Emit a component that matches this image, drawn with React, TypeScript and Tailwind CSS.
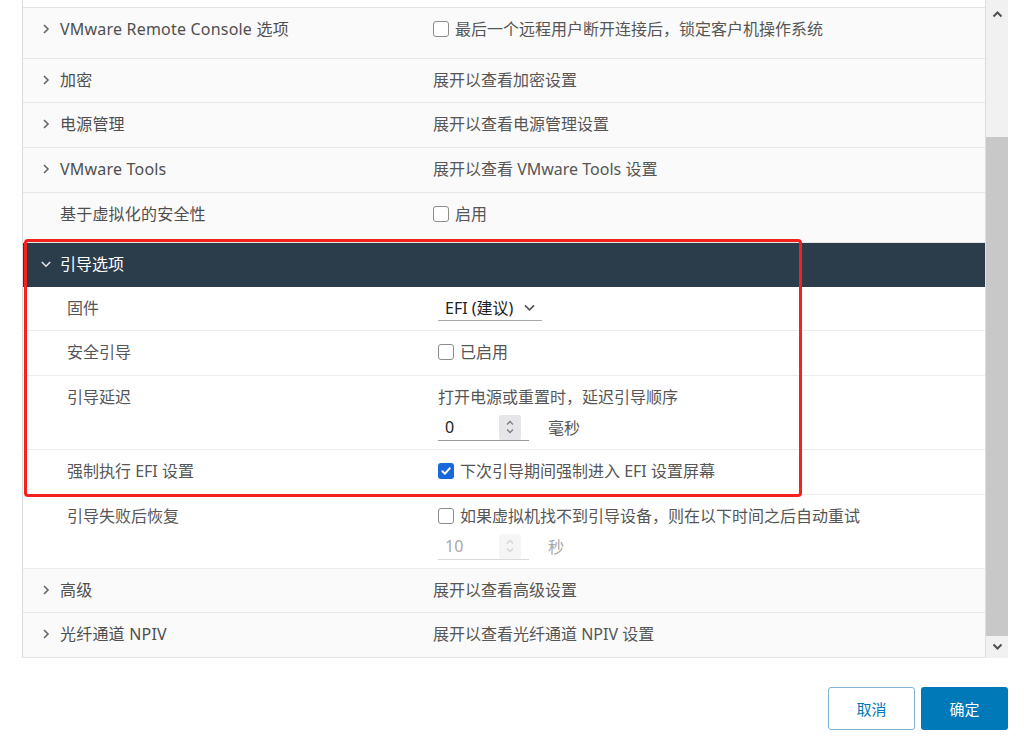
import { ReactNode } from "react";

function ChevronRight() {
  return (
    <svg width="10" height="12" viewBox="0 0 10 12" className="shrink-0">
      <path d="M3 2 7 6 3 10" fill="none" stroke="currentColor" strokeWidth="1.6" />
    </svg>
  );
}

function ChevronDown({ size = 12 }: { size?: number }) {
  return (
    <svg width={size} height={size} viewBox="0 0 12 12" className="shrink-0">
      <path d="M1.8 4 6 8.2 10.2 4" fill="none" stroke="currentColor" strokeWidth="1.5" />
    </svg>
  );
}

function Checkbox({ checked = false }: { checked?: boolean }) {
  if (checked) {
    return (
      <span className="flex h-4 w-4 shrink-0 items-center justify-center rounded-[3px] bg-[#1769d9]">
        <svg width="12" height="12" viewBox="0 0 12 12">
          <path
            d="M2.4 6.2 5 8.7 9.7 3.3"
            fill="none"
            stroke="white"
            strokeWidth="2"
            strokeLinecap="round"
            strokeLinejoin="round"
          />
        </svg>
      </span>
    );
  }
  return <span className="h-4 w-4 shrink-0 rounded-[3px] border border-[#8c8c8c] bg-white" />;
}

function NumberField({ value, unit, disabled = false }: { value: string; unit: string; disabled?: boolean }) {
  return (
    <div className="mt-[6px] flex items-center">
      <div
        className={`flex h-[27px] w-[91px] items-center justify-between border-b pl-[7px] pr-[8px] ${
          disabled ? "border-[#dadada] text-[#a8a8a8]" : "border-[#9a9a9a] text-[#222]"
        }`}
      >
        <span>{value}</span>
        <span
          className={`flex h-[25px] w-[22px] items-center justify-center rounded-[2px] ${
            disabled ? "bg-[#f5f5f5] text-[#d4d4d4]" : "bg-[#e5e5ea] text-[#7c7c7c]"
          }`}
        >
          <svg width="10" height="18" viewBox="0 0 10 18">
            <path d="M2 6.5 5 3.5 8 6.5M2 11.5 5 14.5 8 11.5" fill="none" stroke="currentColor" strokeWidth="1.3" />
          </svg>
        </span>
      </div>
      <span className={`ml-[19px] ${disabled ? "text-[#a8a8a8]" : "text-[#565656]"}`}>{unit}</span>
    </div>
  );
}

function Row({
  label,
  value,
  height,
  chevron = true,
}: {
  label: string;
  value: ReactNode;
  height: string;
  chevron?: boolean;
}) {
  return (
    <div className={`flex items-start border-b border-[#e6e6e6] bg-[#fafafa] pt-[10px] ${height}`}>
      <div className="flex h-[22px] w-[410px] shrink-0 items-center pl-[18px] text-[#4f4f4f]">
        {chevron ? (
          <span className="mr-[9px] flex w-[10px] text-[#666]">
            <ChevronRight />
          </span>
        ) : (
          <span className="mr-[9px] w-[10px]" />
        )}
        <span className="tracking-[0.2px]">{label}</span>
      </div>
      <div className="flex-1 text-[#565656]">{value}</div>
    </div>
  );
}

function SubRow({ label, height, children, padTop = "pt-[10px]" }: { label: string; height: string; children: ReactNode; padTop?: string }) {
  return (
    <div className={`flex border-b border-[#ececec] bg-white ${height}`}>
      <div className="w-[415px] shrink-0 pt-[10px] pl-[44px] text-[#565656]">{label}</div>
      <div className={`flex-1 text-[#565656] ${padTop}`}>{children}</div>
    </div>
  );
}

function CheckText({ checked = false, children }: { checked?: boolean; children: ReactNode }) {
  return (
    <div className="flex items-center gap-[6px]">
      <Checkbox checked={checked} />
      <span>{children}</span>
    </div>
  );
}

export default function App() {
  return (
    <div className="relative h-[743px] w-[1024px] overflow-hidden bg-white font-['Noto_Sans','Noto_Sans_CJK_SC',sans-serif] text-[16px] leading-[22px]">
      <div className="ml-[22px] flex h-[658px] w-[986px] border-l border-[#dcdcdc]">
        <div className="w-[963px] border-r border-[#dedede] pt-[7px]">
          <div className="border-t border-[#e3e3e3]">
            <Row
              label="VMware Remote Console 选项"
              height="h-[51px]"
              value={<CheckText>最后一个远程用户断开连接后，锁定客户机操作系统</CheckText>}
            />
            <Row label="加密" height="h-[44px]" value="展开以查看加密设置" />
            <Row label="电源管理" height="h-[45px]" value="展开以查看电源管理设置" />
            <Row label="VMware Tools" height="h-[45px]" value="展开以查看 VMware Tools 设置" />
            <Row label="基于虚拟化的安全性" height="h-[50px]" chevron={false} value={<CheckText>启用</CheckText>} />

            <div className="flex h-[44px] items-start bg-[#2b3d4a] pt-[10px] pl-[17px] text-white">
              <span className="mr-[8px] flex h-[22px] w-[12px] items-center text-[#e8e8e8]">
                <ChevronDown />
              </span>
              <span>引导选项</span>
            </div>
            <SubRow label="固件" height="h-[44px]" padTop="pt-[8px]">
              <div className="flex h-[26px] w-[104px] items-center justify-between border-b border-[#a8a8a8] pl-[7px] pr-[6px] text-[#222]">
                <span>EFI (建议)</span>
                <span className="text-[#555]">
                  <ChevronDown size={13} />
                </span>
              </div>
            </SubRow>
            <SubRow label="安全引导" height="h-[45px]">
              <CheckText>已启用</CheckText>
            </SubRow>
            <SubRow label="引导延迟" height="h-[74px]">
              <div>打开电源或重置时，延迟引导顺序</div>
              <NumberField value="0" unit="毫秒" />
            </SubRow>
            <SubRow label="强制执行 EFI 设置" height="h-[45px]">
              <CheckText checked>下次引导期间强制进入 EFI 设置屏幕</CheckText>
            </SubRow>
            <SubRow label="引导失败后恢复" height="h-[74px]">
              <CheckText>如果虚拟机找不到引导设备，则在以下时间之后自动重试</CheckText>
              <NumberField value="10" unit="秒" disabled />
            </SubRow>

            <Row label="高级" height="h-[44px]" value="展开以查看高级设置" />
            <Row label="光纤通道 NPIV" height="h-[45px]" value="展开以查看光纤通道 NPIV 设置" />
          </div>
        </div>

        <div className="flex w-[22px] flex-col bg-[#f1f1f1]">
          <div className="flex h-[137px] justify-center pt-[10px]">
            <svg width="11" height="8" viewBox="0 0 11 8">
              <path d="M1.5 6.5 5.5 2.5 9.5 6.5" fill="none" stroke="#505050" strokeWidth="2" />
            </svg>
          </div>
          <div className="h-[499px] bg-[#c8c8c8]" />
          <div className="flex flex-1 items-center justify-center">
            <svg width="11" height="8" viewBox="0 0 11 8">
              <path d="M1.5 1.5 5.5 5.5 9.5 1.5" fill="none" stroke="#505050" strokeWidth="2" />
            </svg>
          </div>
        </div>
      </div>

      <div className="mt-[29px] flex justify-end gap-[6px] pr-[16px] text-[15px]">
        <button
          type="button"
          className="h-[43px] w-[87px] rounded-[3px] border border-[#7fb3d3] bg-white text-[#0079b8]"
        >
          取消
        </button>
        <button type="button" className="h-[43px] w-[87px] rounded-[3px] bg-[#0079b8] text-white">
          确定
        </button>
      </div>

      <div className="pointer-events-none absolute top-[239px] left-[24px] h-[258px] w-[778px] rounded-[4px] border-[3px] border-[#f5211c]" />
    </div>
  );
}
